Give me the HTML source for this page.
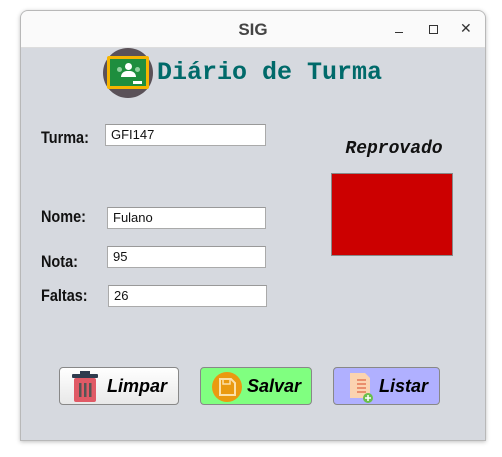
<!DOCTYPE html>
<html><head><style>
body{margin:0;width:502px;height:457px;background:#fff;position:relative;overflow:hidden;font-family:"Liberation Sans",sans-serif}
.win{position:absolute;left:20px;top:10px;width:464px;height:429px;border:1px solid #b8b8b8;border-radius:8px 8px 0 0;background:#d6d9df;overflow:hidden;box-shadow:0 1px 4px rgba(0,0,0,.25)}
.tb{position:absolute;left:0;top:0;width:100%;height:36px;background:#fafafa;border-bottom:1px solid #ddd}
.a{position:absolute}
.lab{position:absolute;font-weight:bold;font-size:17px;color:#111;transform:scaleX(.85);transform-origin:left}
.in{position:absolute;background:#fff;border:1px solid #aaa;border-top-color:#999;height:22px;box-sizing:border-box;width:159px;font-size:13px;padding:2px 5px;line-height:16px;color:#111}
.btn{position:absolute;top:356px;height:38px;border:1px solid #888;border-radius:4px;box-sizing:border-box;font-weight:bold;font-style:italic;font-size:18px;line-height:36px}
</style></head><body>
<div class="win">
<div class="tb"><div class="a" style="left:0;width:100%;text-align:center;top:9px;font-weight:bold;font-size:17px;color:#444">SIG</div>
<div class="a" style="left:374px;top:21px;width:8px;height:1px;background:#333"></div>
<div class="a" style="left:408px;top:14px;width:7px;height:7px;border:1px solid #333"></div>
<div class="a" style="left:439px;top:9px;font-size:14px;color:#333">✕</div></div>
<div class="a" style="left:82px;top:37px;width:50px;height:50px;border-radius:50%;background:#5a5158"></div>
<div class="a" style="left:86px;top:45px;width:42px;height:33px;background:#f5b400;border-radius:2px"></div>
<div class="a" style="left:89px;top:48px;width:36px;height:27px;background:#1e8e3e"></div>
<div class="a" style="left:104px;top:52px;width:7px;height:7px;border-radius:50%;background:#fff"></div>
<div class="a" style="left:100px;top:60px;width:15px;height:6px;border-radius:6px 6px 0 0;background:#fff"></div>
<div class="a" style="left:96px;top:56px;width:5px;height:5px;border-radius:50%;background:#8fd19e"></div>
<div class="a" style="left:114px;top:56px;width:5px;height:5px;border-radius:50%;background:#8fd19e"></div>
<div class="a" style="left:112px;top:70px;width:9px;height:3px;background:#fff"></div>
<div class="a" style="left:136px;top:47px;font-family:'Liberation Mono',monospace;font-weight:bold;font-size:25px;color:#006a6a">Diário de Turma</div>
<div class="lab" style="left:20px;top:117px">Turma:</div>
<div class="lab" style="left:20px;top:196px">Nome:</div>
<div class="lab" style="left:20px;top:241px">Nota:</div>
<div class="lab" style="left:20px;top:275px">Faltas:</div>
<div class="in" style="left:84px;top:113px;width:161px">GFI147</div>
<div class="in" style="left:86px;top:196px">Fulano</div>
<div class="in" style="left:86px;top:235px">95</div>
<div class="in" style="left:87px;top:274px">26</div>
<div class="a" style="left:310px;top:128px;width:126px;text-align:center;font-family:'Liberation Mono',monospace;font-weight:bold;font-style:italic;font-size:18px;color:#111">Reprovado</div>
<div class="a" style="left:310px;top:162px;width:122px;height:83px;background:#cc0000;border:1px solid #888;box-sizing:border-box"></div>
<div class="btn" style="left:38px;width:120px;background:linear-gradient(#fff,#e8e8e8)">
<svg class="a" style="left:10px;top:3px" width="30" height="32"><rect x="2" y="3" width="26" height="4" rx="1" fill="#2f3b4e"/><rect x="10" y="0" width="10" height="4" fill="#2f3b4e"/><rect x="4" y="7" width="22" height="24" rx="2" fill="#e05a66"/><rect x="9" y="12" width="2.5" height="14" fill="#555"/><rect x="14" y="12" width="2.5" height="14" fill="#555"/><rect x="19" y="12" width="2.5" height="14" fill="#555"/></svg>
<span class="a" style="left:47px">Limpar</span></div>
<div class="btn" style="left:179px;width:112px;background:#80ff80">
<svg class="a" style="left:10px;top:3px" width="32" height="32"><circle cx="16" cy="16" r="15" fill="#ea9a10"/><path d="M9 8h11l4 4v12H9z" fill="none" stroke="#fbe0a8" stroke-width="2"/><rect x="12" y="8" width="7" height="5" fill="none" stroke="#fbe0a8" stroke-width="1.5"/></svg>
<span class="a" style="left:46px">Salvar</span></div>
<div class="btn" style="left:312px;width:107px;background:#b0b0ff">
<svg class="a" style="left:12px;top:2px" width="30" height="34"><path d="M4 3h15l5 5v20H4z" fill="#fbd3b0"/><g stroke="#e06040" stroke-width="1.2"><line x1="11" y1="10" x2="20" y2="10"/><line x1="11" y1="14" x2="20" y2="14"/><line x1="11" y1="18" x2="20" y2="18"/><line x1="11" y1="22" x2="20" y2="22"/></g><circle cx="22" cy="28" r="5" fill="#6abf4b"/><path d="M22 25v6M19 28h6" stroke="#fff" stroke-width="1.5"/></svg>
<span class="a" style="left:45px">Listar</span></div>
</div>
</body></html>
